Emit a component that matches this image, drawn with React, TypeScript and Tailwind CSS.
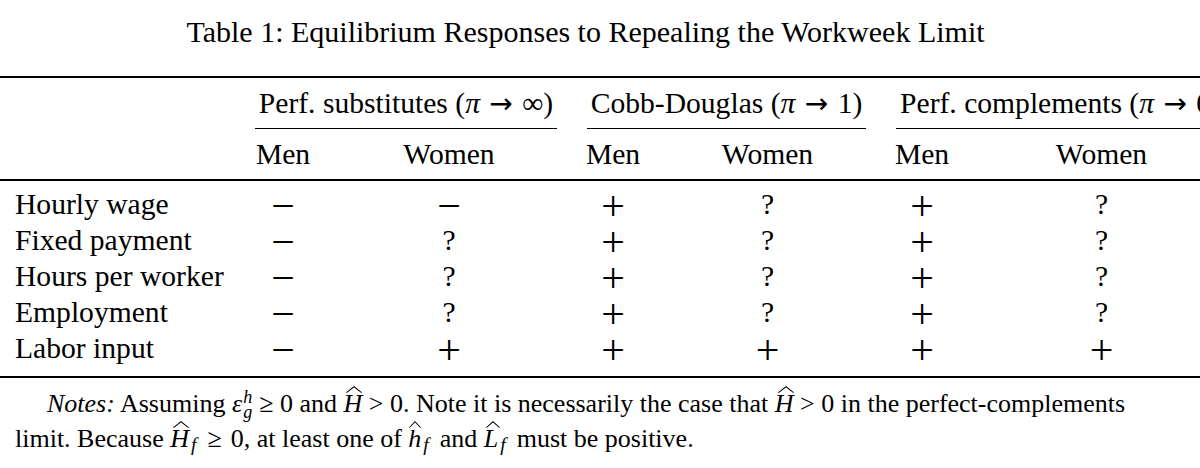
import React from "react";

const rows: string[][] = [
  ["Hourly wage", "−", "−", "+", "?", "+", "?"],
  ["Fixed payment", "−", "?", "+", "?", "+", "?"],
  ["Hours per worker", "−", "?", "+", "?", "+", "?"],
  ["Employment", "−", "?", "+", "?", "+", "?"],
  ["Labor input", "−", "+", "+", "+", "+", "+"],
];

const cols = "grid grid-cols-[240px_86px_246px_82px_227px_82px_277px]";

function Hat({
  children,
  left,
  width,
}: {
  children: React.ReactNode;
  left: number;
  width: number;
}) {
  return (
    <span className="relative inline-block leading-none">
      {children}
      <svg
        className="absolute top-[-5px] h-[7px]"
        style={{ left, width }}
        viewBox="0 0 20 7"
        preserveAspectRatio="none"
      >
        <path d="M0.5 6.6 L10 0.7 L19.5 6.6" fill="none" stroke="#000" strokeWidth="1.1" />
      </svg>
    </span>
  );
}

function Arrow() {
  return <span className="font-['DejaVu_Sans',sans-serif] text-[28px] mx-[2px]">→</span>;
}

function Pi() {
  return <i>π</i>;
}

function Sub({ children }: { children: React.ReactNode }) {
  return (
    <sub className="ml-[2px] mr-[11px]">
      <i>{children}</i>
    </sub>
  );
}

export default function App() {
  return (
    <div className="w-[1200px] h-[468px] overflow-hidden bg-white text-black font-['Liberation_Serif',serif]">
      <div className="w-[1240px]">
        {/* Title */}
        <div className="h-[76px] w-[1171px] pt-[14px] text-center text-[30px] leading-[36px] whitespace-nowrap">
          Table 1: Equilibrium Responses to Repealing the Workweek Limit
        </div>

        {/* top rule */}
        <div className="h-[2px] bg-black" />

        <div className="text-[29.6px]">
          {/* Group header */}
          <div className={cols}>
            <div className="h-[51px]" />
            {[
              <>
                Perf. substitutes (<Pi /> <Arrow /> ∞)
              </>,
              <>
                Cobb-Douglas (<Pi /> <Arrow /> 1)
              </>,
              <>
                Perf. complements (<Pi /> <Arrow /> 0)
              </>,
            ].map((t, i) => (
              <div key={i} className="col-span-2 flex flex-col h-[51px]">
                <div className="h-[50px] leading-[50px] text-center whitespace-nowrap">{t}</div>
                <div className="h-[1px] bg-black mx-[15px]" />
              </div>
            ))}
          </div>

          {/* sub header */}
          <div className={cols}>
            <div className="h-[50px]" />
            {["Men", "Women", "Men", "Women", "Men", "Women"].map((t, i) => (
              <div key={i} className="h-[50px] leading-[50px] text-center">
                {t}
              </div>
            ))}
          </div>

          {/* mid rule */}
          <div className="h-[1.5px] bg-black" />

          <div className="pt-[5px] pb-[10px]">
            {rows.map((r, ri) => (
              <div key={ri} className={cols}>
                {r.map((c, ci) => (
                  <div
                    key={ci}
                    className={
                      ci === 0
                        ? "h-[36px] leading-[36px] pl-[15px] whitespace-nowrap"
                        : c === "?"
                        ? "h-[36px] leading-[36px] text-center"
                        : "h-[36px] leading-[40px] text-center text-[42px]"
                    }
                  >
                    {c}
                  </div>
                ))}
              </div>
            ))}
          </div>
        </div>

        {/* bottom rule */}
        <div className="h-[2px] bg-black" />

        {/* Notes */}
        <div className="pt-[8px] pl-[15px] text-[26px]">
          <div className="h-[35px] leading-[35px] pl-[32px] whitespace-nowrap">
            <i>Notes:</i> Assuming <i>ε</i>
            <span className="inline-flex flex-col align-[9px] text-[18px] leading-[15px] ml-[1px] mr-[7px]">
              <i>h</i>
              <i>g</i>
            </span>
            ≥ 0 and{" "}
            <Hat left={3} width={16}>
              <i>H</i>
            </Hat>{" "}
            &gt; 0. Note it is necessarily the case that{" "}
            <Hat left={3} width={16}>
              <i>H</i>
            </Hat>{" "}
            &gt; 0 in the perfect-complements
          </div>
          <div className="h-[35px] leading-[35px] whitespace-nowrap">
            limit. Because{" "}
            <Hat left={3} width={16}>
              <i>H</i>
            </Hat>
            <Sub>f</Sub>≥<span className="ml-[9px]">0,</span> at least one of{" "}
            <Hat left={1} width={12}>
              <i>h</i>
            </Hat>
            <Sub>f</Sub>and{" "}
            <Hat left={2} width={14}>
              <i>L</i>
            </Hat>
            <Sub>f</Sub>must be positive.
          </div>
        </div>
      </div>
    </div>
  );
}
